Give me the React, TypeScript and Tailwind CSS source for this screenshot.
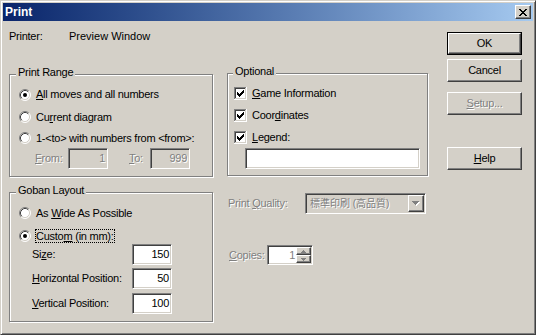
import React from "react";

const sunken =
  "border border-t-[#808080] border-l-[#808080] border-b-white border-r-white shadow-[inset_1px_1px_0_#404040,inset_-1px_-1px_0_#d4d0c8]";
const raised =
  "border border-t-white border-l-white border-b-[#404040] border-r-[#404040] shadow-[inset_-1px_-1px_0_#808080,inset_1px_1px_0_#d4d0c8]";
const dis = "text-[#808080] [text-shadow:1px_1px_0_#fff]";

function Radio({ checked }: { checked?: boolean }) {
  return (
    <svg width="12" height="12" viewBox="0 0 12 12" className="shrink-0">
      <circle cx="6" cy="6" r="5" fill="#fff" />
      <path d="M2.11 9.89 A5.5 5.5 0 0 1 9.89 2.11" stroke="#808080" fill="none" />
      <path d="M9.89 2.11 A5.5 5.5 0 0 1 2.11 9.89" stroke="#fff" fill="none" />
      <path d="M2.82 9.18 A4.5 4.5 0 0 1 9.18 2.82" stroke="#404040" fill="none" />
      <path d="M9.18 2.82 A4.5 4.5 0 0 1 2.82 9.18" stroke="#d4d0c8" fill="none" />
      {checked && <circle cx="6" cy="6" r="2" fill="#000" />}
    </svg>
  );
}

function Check() {
  return (
    <svg width="13" height="13" viewBox="0 0 13 13" className="shrink-0" shapeRendering="crispEdges">
      <rect x="0" y="0" width="13" height="13" fill="#fff" />
      <rect x="0" y="0" width="12" height="12" fill="#808080" />
      <rect x="1" y="1" width="11" height="11" fill="#d4d0c8" />
      <rect x="1" y="1" width="10" height="10" fill="#404040" />
      <rect x="2" y="2" width="9" height="9" fill="#fff" />
      <path
        d="M9 3h1v1h-1z M8 4h2v1h-2z M3 5h1v1h-1z M7 5h3v1h-3z M3 6h2v1h-2z M6 6h3v1h-3z M3 7h5v1h-5z M4 8h3v1h-3z M5 9h1v1h-1z"
        fill="#000"
      />
    </svg>
  );
}

function Group({
  title,
  className,
  labelClass,
  children,
}: {
  title: string;
  className?: string;
  labelClass?: string;
  children?: React.ReactNode;
}) {
  return (
    <div className={`relative border border-[#808080] shadow-[inset_1px_1px_0_#fff,1px_1px_0_#fff] ${className ?? ""}`}>
      <div className={`absolute -top-[9px] px-[2px] bg-[#d4d0c8] leading-[13px] ${labelClass ?? "left-[6px]"}`}>{title}</div>
      {children}
    </div>
  );
}

function Btn({ children, isDefault, disabled }: { children: React.ReactNode; isDefault?: boolean; disabled?: boolean }) {
  const inner = (
    <div className={`${raised} h-full flex items-center justify-center bg-[#d4d0c8] ${disabled ? dis : ""}`}>{children}</div>
  );
  return <div className={`h-[23px] w-[75px] ${isDefault ? "border border-black" : ""}`}>{inner}</div>;
}

export default function App() {
  return (
    <div
      className={`w-[536px] h-[335px] bg-[#d4d0c8] border border-t-[#d4d0c8] border-l-[#d4d0c8] border-r-[#404040] border-b-[#404040] shadow-[inset_1px_1px_0_#fff,inset_-1px_-1px_0_#808080] p-[2px] font-['Liberation_Sans','Noto_Sans_CJK_JP',sans-serif] text-[11px] leading-[13px] tracking-[-0.25px] text-black overflow-hidden`}
    >
      {/* Title bar */}
      <div className="h-[18px] flex items-center justify-between bg-linear-to-r from-[#0a246a] to-[#a6caf0] pl-[2px] pr-[2px]">
        <span className="text-white font-bold text-[12px] leading-[14px] tracking-normal">Print</span>
        <div className={`${raised} w-[16px] h-[14px] flex items-center justify-center bg-[#d4d0c8]`}>
          <svg width="8" height="7" viewBox="0 0 8 7" shapeRendering="crispEdges">
            <path
              d="M0 0h2v1h-2z M6 0h2v1h-2z M1 1h2v1h-2z M5 1h2v1h-2z M2 2h4v1h-4z M3 3h2v1h-2z M2 4h4v1h-4z M1 5h2v1h-2z M5 5h2v1h-2z M0 6h2v1h-2z M6 6h2v1h-2z"
              fill="#000"
            />
          </svg>
        </div>
      </div>

      {/* Body */}
      <div className="flex pl-[6px]">
        <div className="w-[419px] flex flex-col">
          <div className="h-[13px] mt-[9px] flex">
            <span className="w-[60px]">Printer:</span>
            <span className="tracking-normal">Preview Window</span>
          </div>
          <div className="flex gap-[14px]">
            {/* Left column */}
            <div className="w-[204px] pt-[31px] flex flex-col">
              <Group title="Print Range" className="h-[103px]">
                <div className="pl-[9px] pt-[8px]">
                  <div className="h-[23px] flex items-center">
                    <Radio checked />
                    <span className="ml-[5px]">
                      <u>A</u>ll moves and all numbers
                    </span>
                  </div>
                  <div className="h-[22px] flex items-center">
                    <Radio />
                    <span className="ml-[5px]">
                      Cu<u>r</u>rent diagram
                    </span>
                  </div>
                  <div className="h-[20px] flex items-center">
                    <Radio />
                    <span className="ml-[5px]">{"1-<to> with numbers from <from>:"}</span>
                  </div>
                  <div className="h-[21px] flex items-center pl-[16px]">
                    <span className={`w-[33px] ${dis}`}>
                      <u>F</u>rom:
                    </span>
                    <div className={`${sunken} w-[40px] h-[21px] flex items-center justify-end pr-[2px] bg-[#d4d0c8] ${dis}`}>1</div>
                    <span className={`ml-[21px] w-[21px] ${dis}`}>
                      <u>T</u>o:
                    </span>
                    <div className={`${sunken} w-[40px] h-[21px] flex items-center justify-end pr-[2px] bg-[#d4d0c8] ${dis}`}>999</div>
                  </div>
                </div>
              </Group>

              <Group title="Goban Layout" className="h-[130px] mt-[15px]">
                <div className="pl-[9px] pt-[10px]">
                  <div className="h-[20px] flex items-center">
                    <Radio />
                    <span className="ml-[5px]">
                      As <u>W</u>ide As Possible
                    </span>
                  </div>
                  <div className="h-[16px] mt-[5px] flex items-center">
                    <Radio checked />
                    <span className="ml-[4px] border border-dotted border-black leading-[12px]">
                      Custo<u>m</u> (in mm):
                    </span>
                  </div>
                  <div className="h-[21px] flex items-center pl-[13px]">
                    <span className="w-[100px]">
                      Si<u>z</u>e:
                    </span>
                    <div className={`${sunken} w-[40px] h-[21px] bg-white flex items-center justify-end pr-[2px]`}>150</div>
                  </div>
                  <div className="h-[21px] mt-[3px] flex items-center pl-[13px]">
                    <span className="w-[100px]">
                      <u>H</u>orizontal Position:
                    </span>
                    <div className={`${sunken} w-[40px] h-[21px] bg-white flex items-center justify-end pr-[2px]`}>50</div>
                  </div>
                  <div className="h-[21px] mt-[4px] flex items-center pl-[13px]">
                    <span className="w-[100px]">
                      <u>V</u>ertical Position:
                    </span>
                    <div className={`${sunken} w-[40px] h-[21px] bg-white flex items-center justify-end pr-[2px]`}>100</div>
                  </div>
                </div>
              </Group>
            </div>

            {/* Right column */}
            <div className="w-[201px] pt-[30px] flex flex-col">
              <Group title="Optional" className="h-[103px]" labelClass="left-[5px]">
                <div className="pl-[6px] pt-[8px]">
                  <div className="h-[22px] flex items-center">
                    <Check />
                    <span className="ml-[5px]">
                      <u>G</u>ame Information
                    </span>
                  </div>
                  <div className="h-[22px] flex items-center">
                    <Check />
                    <span className="ml-[5px]">
                      Coor<u>d</u>inates
                    </span>
                  </div>
                  <div className="h-[22px] flex items-center">
                    <Check />
                    <span className="ml-[5px]">
                      <u>L</u>egend:
                    </span>
                  </div>
                  <div className={`${sunken} ml-[11px] w-[175px] h-[21px] bg-white`} />
                </div>
              </Group>

              <div className="mt-[17px] h-[21px] flex items-center pl-[1px]">
                <span className={`w-[77px] ${dis}`}>
                  Print <u>Q</u>uality:
                </span>
                <div className={`${sunken} w-[121px] h-[21px] p-[1px] flex bg-[#d4d0c8]`}>
                  <div className={`flex-1 flex items-center pl-[3px] text-[10px] tracking-normal ${dis}`}>標準印刷 (高品質)</div>
                  <div className={`${raised} w-[16px] h-full flex items-center justify-center bg-[#d4d0c8]`}>
                    <svg width="8" height="5" viewBox="0 0 8 5" shapeRendering="crispEdges">
                      <path d="M1 1h7v1h-7z M2 2h5v1h-5z M3 3h3v1h-3z M4 4h1v1h-1z" fill="#fff" />
                      <path d="M0 0h7v1h-7z M1 1h5v1h-5z M2 2h3v1h-3z M3 3h1v1h-1z" fill="#808080" />
                    </svg>
                  </div>
                </div>
              </div>

              <div className="mt-[31px] h-[20px] flex items-center pl-[2px]">
                <span className={`w-[38px] ${dis}`}>
                  <u>C</u>opies:
                </span>
                <div className={`${sunken} w-[46px] h-[20px] p-[1px] flex bg-white`}>
                  <div className="flex-1 flex items-center justify-end pr-[1px] text-[#808080]">1</div>
                  <div className="w-[15px] flex flex-col">
                    <div className={`${raised} bg-[#d4d0c8] flex-1 flex items-center justify-center`}>
                      <svg width="5" height="3" viewBox="0 0 5 3" shapeRendering="crispEdges">
                        <path d="M2 0h1v1h-1z M1 1h3v1h-3z M0 2h5v1h-5z" fill="#808080" />
                      </svg>
                    </div>
                    <div className={`${raised} bg-[#d4d0c8] flex-1 flex items-center justify-center`}>
                      <svg width="5" height="3" viewBox="0 0 5 3" shapeRendering="crispEdges">
                        <path d="M0 0h5v1h-5z M1 1h3v1h-3z M2 2h1v1h-1z" fill="#808080" />
                      </svg>
                    </div>
                  </div>
                </div>
              </div>
            </div>
          </div>
        </div>

        {/* Buttons */}
        <div className="ml-[19px] pt-[11px] flex flex-col">
          <Btn isDefault>OK</Btn>
          <div className="mt-[4px]">
            <Btn>Cancel</Btn>
          </div>
          <div className="mt-[10px]">
            <Btn disabled>
              <span>
                <u>S</u>etup...
              </span>
            </Btn>
          </div>
          <div className="mt-[32px]">
            <Btn>
              <span>
                <u>H</u>elp
              </span>
            </Btn>
          </div>
        </div>
      </div>
    </div>
  );
}
